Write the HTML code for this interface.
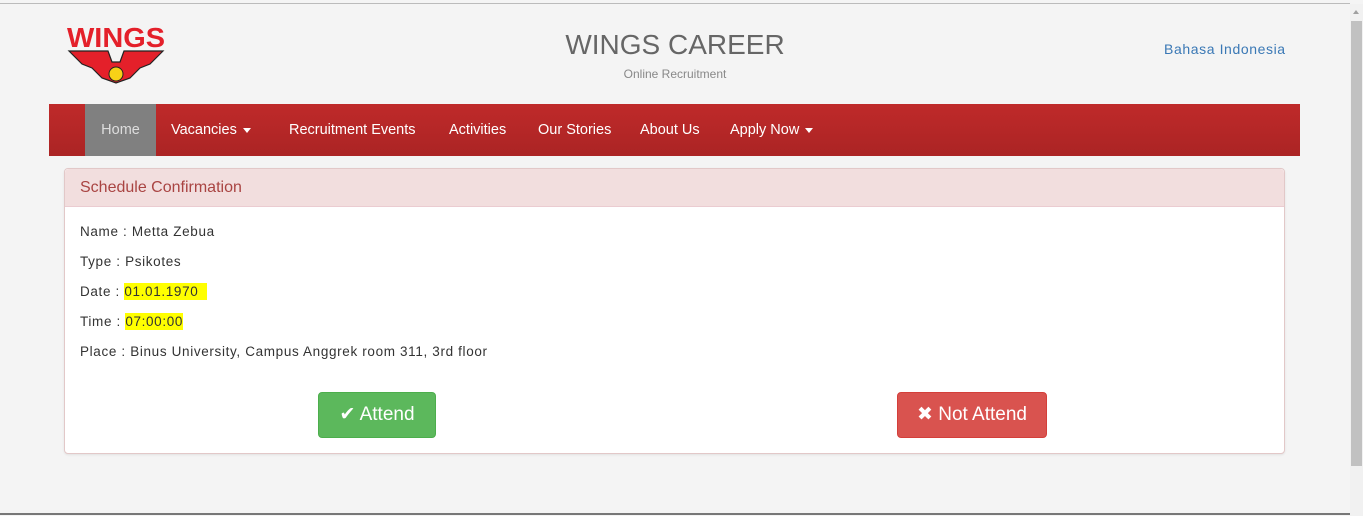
<!DOCTYPE html>
<html><head><meta charset="utf-8"><style>
*{box-sizing:border-box;margin:0;padding:0}
body{width:1363px;height:516px;background:#f4f4f4;font-family:"Liberation Sans",sans-serif;position:relative;overflow:hidden;color:#333}
.topline{position:absolute;left:0;top:3px;width:1350px;height:1px;background:#bbb}
.botline{position:absolute;left:0;top:513px;width:1350px;height:2px;background:#777}
.sb{position:absolute;left:1350px;top:4px;width:13px;height:512px;background:#f1f1f1}
.sb .th{position:absolute;left:1px;top:17px;width:11px;height:445px;background:#c1c1c1}
.sb .ar{position:absolute;left:3px;top:6px;width:0;height:0;border-left:3px solid transparent;border-right:3px solid transparent;border-bottom:4px solid #a0a0a0}
.title{position:absolute;left:0;width:1350px;text-align:center;top:29px;font-size:28px;color:#666}
.sub{position:absolute;left:0;width:1350px;text-align:center;top:67px;font-size:12px;color:#888}
.lang{position:absolute;left:1164px;top:41px;font-size:14px;color:#3a78b5;letter-spacing:.6px}
.nav{position:absolute;left:49px;top:104px;width:1251px;height:52px;background:linear-gradient(#bf2a2a,#ab2424)}
.nav a{position:absolute;top:0;height:52px;line-height:52px;color:#fff;font-size:14.5px;text-decoration:none}
.home{left:36px;width:71px;background:#808080;text-align:center;color:#ddd!important}
.car{display:inline-block;border-left:4px solid transparent;border-right:4px solid transparent;border-top:5px solid #fff;margin-left:6px;vertical-align:middle}
.panel{position:absolute;left:64px;top:168px;width:1221px;height:286px;background:#fff;border:1px solid #e2c8c8;border-radius:4px;box-shadow:0 1px 2px rgba(0,0,0,.08)}
.ph{height:38px;background:#f2dede;border-bottom:1px solid #ebccd1;color:#a94442;font-size:16px;padding:10px 0 0 15px;border-radius:4px 4px 0 0}
.row{position:absolute;left:15px;font-size:13.5px;color:#333;letter-spacing:.65px}
.hl{background:#ffff00;padding:1px 0}
.btn{position:absolute;top:223px;height:46px;border-radius:4px;color:#fff;font-size:19px;line-height:44px;text-align:center}
</style></head><body>
<div class="topline"></div>
<svg style="position:absolute;left:66px;top:24px" width="100" height="60" viewBox="0 0 100 60">
<text x="1" y="23" textLength="98" lengthAdjust="spacingAndGlyphs" font-family="Liberation Sans" font-weight="bold" font-size="28" fill="#e4202a">WINGS</text>
<path d="M3 27 L42 27 L46 38 L54 38 L58 27 L97 27 L84 40 L74 44 L64 54 L50 59 L36 54 L26 44 L16 40 Z" fill="#e4202a" stroke="#222" stroke-width="1.2"/>
<circle cx="50" cy="50" r="7" fill="#f7d117" stroke="#222"/>
</svg>
<div class="title">WINGS CAREER</div>
<div class="sub">Online Recruitment</div>
<div class="lang">Bahasa Indonesia</div>
<div class="nav">
<a class="home">Home</a>
<a style="left:122px">Vacancies<span class="car"></span></a>
<a style="left:240px">Recruitment Events</a>
<a style="left:400px">Activities</a>
<a style="left:489px">Our Stories</a>
<a style="left:591px">About Us</a>
<a style="left:681px">Apply Now<span class="car"></span></a>
</div>
<div class="panel">
<div class="ph">Schedule Confirmation</div>
<div class="row" style="top:55px">Name : Metta Zebua</div>
<div class="row" style="top:85px">Type : Psikotes</div>
<div class="row" style="top:115px">Date : <span class="hl">01.01.1970&nbsp;&nbsp;</span></div>
<div class="row" style="top:145px">Time : <span class="hl">07:00:00</span></div>
<div class="row" style="top:175px">Place : Binus University, Campus Anggrek room 311, 3rd floor</div>
<div class="btn" style="left:253px;width:118px;background:#5cb85c;border:1px solid #4cae4c">✔ Attend</div>
<div class="btn" style="left:832px;width:150px;background:#d9534f;border:1px solid #d43f3a">✖ Not Attend</div>
</div>
<div class="sb"><div class="ar"></div><div class="th"></div></div>
<div class="botline"></div>
</body></html>
